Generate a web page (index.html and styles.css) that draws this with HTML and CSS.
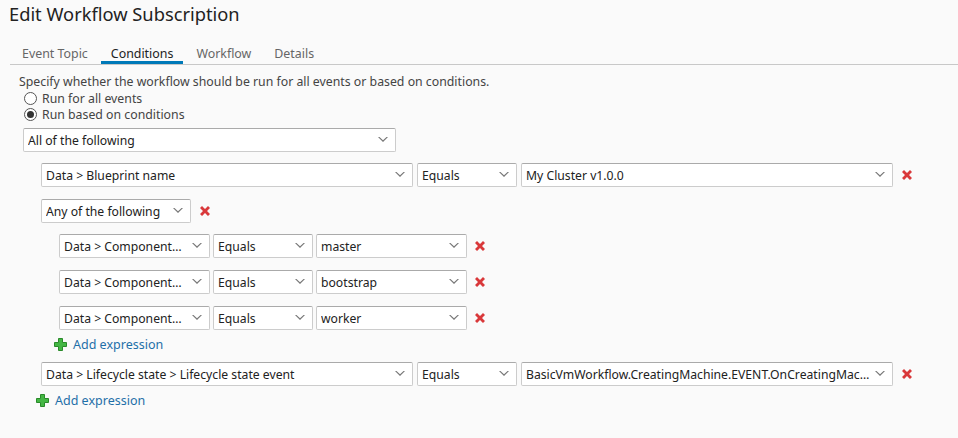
FILE: index.html
```html
<!DOCTYPE html>
<html>
<head>
<meta charset="utf-8">
<link rel="stylesheet" href="styles.css">
</head>
<body>
<div class="page">
  <h1 class="title">Edit Workflow Subscription</h1>
  <div class="tabs">
    <div class="tab">Event Topic</div>
    <div class="tab active">Conditions</div>
    <div class="tab">Workflow</div>
    <div class="tab">Details</div>
  </div>
  <div class="content">
    <p class="desc">Specify whether the workflow should be run for all events or based on conditions.</p>
    <label class="radio"><span class="dot"></span>Run for all events</label>
    <label class="radio"><span class="dot checked"></span>Run based on conditions</label>

    <div class="sel w-all top-sel"><span class="txt">All of the following</span><svg class="chev" viewBox="0 0 10 6"><path d="M0 0 L5 5 L10 0 L8.5 0 L5 3.2 L1.5 0Z"/></svg></div>

    <div class="group">
      <div class="row">
        <div class="sel w-field"><span class="txt">Data &gt; Blueprint name</span><svg class="chev" viewBox="0 0 10 6"><path d="M0 0 L5 5 L10 0 L8.5 0 L5 3.2 L1.5 0Z"/></svg></div>
        <div class="sel w-op"><span class="txt">Equals</span><svg class="chev" viewBox="0 0 10 6"><path d="M0 0 L5 5 L10 0 L8.5 0 L5 3.2 L1.5 0Z"/></svg></div>
        <div class="sel w-field"><span class="txt">My Cluster v1.0.0</span><svg class="chev" viewBox="0 0 10 6"><path d="M0 0 L5 5 L10 0 L8.5 0 L5 3.2 L1.5 0Z"/></svg></div>
        <svg class="del" viewBox="0 0 12 12"><path d="M1 3 L3 1 L6 4 L9 1 L11 3 L8 6 L11 9 L9 11 L6 8 L3 11 L1 9 L4 6Z"/></svg>
      </div>
      <div class="row">
        <div class="sel w-any"><span class="txt">Any of the following</span><svg class="chev" viewBox="0 0 10 6"><path d="M0 0 L5 5 L10 0 L8.5 0 L5 3.2 L1.5 0Z"/></svg></div>
        <svg class="del" viewBox="0 0 12 12"><path d="M1 3 L3 1 L6 4 L9 1 L11 3 L8 6 L11 9 L9 11 L6 8 L3 11 L1 9 L4 6Z"/></svg>
      </div>
      <div class="nested">
        <div class="row small">
          <div class="sel w-nfield"><span class="txt">Data &gt; Component…</span><svg class="chev" viewBox="0 0 10 6"><path d="M0 0 L5 5 L10 0 L8.5 0 L5 3.2 L1.5 0Z"/></svg></div>
          <div class="sel w-op"><span class="txt">Equals</span><svg class="chev" viewBox="0 0 10 6"><path d="M0 0 L5 5 L10 0 L8.5 0 L5 3.2 L1.5 0Z"/></svg></div>
          <div class="sel w-nfield"><span class="txt">master</span><svg class="chev" viewBox="0 0 10 6"><path d="M0 0 L5 5 L10 0 L8.5 0 L5 3.2 L1.5 0Z"/></svg></div>
          <svg class="del" viewBox="0 0 12 12"><path d="M1 3 L3 1 L6 4 L9 1 L11 3 L8 6 L11 9 L9 11 L6 8 L3 11 L1 9 L4 6Z"/></svg>
        </div>
        <div class="row small">
          <div class="sel w-nfield"><span class="txt">Data &gt; Component…</span><svg class="chev" viewBox="0 0 10 6"><path d="M0 0 L5 5 L10 0 L8.5 0 L5 3.2 L1.5 0Z"/></svg></div>
          <div class="sel w-op"><span class="txt">Equals</span><svg class="chev" viewBox="0 0 10 6"><path d="M0 0 L5 5 L10 0 L8.5 0 L5 3.2 L1.5 0Z"/></svg></div>
          <div class="sel w-nfield"><span class="txt">bootstrap</span><svg class="chev" viewBox="0 0 10 6"><path d="M0 0 L5 5 L10 0 L8.5 0 L5 3.2 L1.5 0Z"/></svg></div>
          <svg class="del" viewBox="0 0 12 12"><path d="M1 3 L3 1 L6 4 L9 1 L11 3 L8 6 L11 9 L9 11 L6 8 L3 11 L1 9 L4 6Z"/></svg>
        </div>
        <div class="row small">
          <div class="sel w-nfield"><span class="txt">Data &gt; Component…</span><svg class="chev" viewBox="0 0 10 6"><path d="M0 0 L5 5 L10 0 L8.5 0 L5 3.2 L1.5 0Z"/></svg></div>
          <div class="sel w-op"><span class="txt">Equals</span><svg class="chev" viewBox="0 0 10 6"><path d="M0 0 L5 5 L10 0 L8.5 0 L5 3.2 L1.5 0Z"/></svg></div>
          <div class="sel w-nfield"><span class="txt">worker</span><svg class="chev" viewBox="0 0 10 6"><path d="M0 0 L5 5 L10 0 L8.5 0 L5 3.2 L1.5 0Z"/></svg></div>
          <svg class="del" viewBox="0 0 12 12"><path d="M1 3 L3 1 L6 4 L9 1 L11 3 L8 6 L11 9 L9 11 L6 8 L3 11 L1 9 L4 6Z"/></svg>
        </div>
        <a class="add inner-add"><svg class="plus" viewBox="0 0 13 13"><path d="M4.5 0.5 H8.5 V4.5 H12.5 V8.5 H8.5 V12.5 H4.5 V8.5 H0.5 V4.5 H4.5Z"/></svg>Add expression</a>
      </div>
      <div class="row">
        <div class="sel w-field"><span class="txt">Data &gt; Lifecycle state &gt; Lifecycle state event</span><svg class="chev" viewBox="0 0 10 6"><path d="M0 0 L5 5 L10 0 L8.5 0 L5 3.2 L1.5 0Z"/></svg></div>
        <div class="sel w-op"><span class="txt">Equals</span><svg class="chev" viewBox="0 0 10 6"><path d="M0 0 L5 5 L10 0 L8.5 0 L5 3.2 L1.5 0Z"/></svg></div>
        <div class="sel w-field"><span class="txt">BasicVmWorkflow.CreatingMachine.EVENT.OnCreatingMac…</span><svg class="chev" viewBox="0 0 10 6"><path d="M0 0 L5 5 L10 0 L8.5 0 L5 3.2 L1.5 0Z"/></svg></div>
        <svg class="del" viewBox="0 0 12 12"><path d="M1 3 L3 1 L6 4 L9 1 L11 3 L8 6 L11 9 L9 11 L6 8 L3 11 L1 9 L4 6Z"/></svg>
      </div>
    </div>
    <a class="add outer-add"><svg class="plus" viewBox="0 0 13 13"><path d="M4.5 0.5 H8.5 V4.5 H12.5 V8.5 H8.5 V12.5 H4.5 V8.5 H0.5 V4.5 H4.5Z"/></svg>Add expression</a>
  </div>
</div>
</body>
</html>
```

FILE: styles.css
```css
* { box-sizing: border-box; }
html, body { margin: 0; padding: 0; background: #fafafa; }
body {
  font-family: "Noto Sans", "DejaVu Sans", sans-serif;
  font-size: 12px;
  color: #333;
  width: 958px;
  height: 438px;
  overflow: hidden;
}
.page { padding: 0; }
.title {
  margin: 0;
  padding: 2px 0 0 9px;
  font-size: 18.3px;
  font-weight: normal;
  color: #222;
  line-height: 24px;
}
.tabs {
  display: flex;
  gap: 3px;
  margin: 18px 0 0 10px;
  padding-left: 2px;
  border-bottom: 1px solid #c8c8c8;
}
.tab {
  padding: 1px 10px 0;
  line-height: 17px;
  height: 20px;
  color: #666;
  font-size: 12.4px;
}
.tab.active {
  color: #222;
  border-bottom: 3px solid #0079b8;
}
.content { padding: 8px 0 0 19px; }
.desc { margin: 0; line-height: 17px; color: #444; font-size: 12.3px; }
.radio {
  display: flex;
  align-items: center;
  height: 16px;
  color: #444;
  padding-left: 5px;
  font-size: 12.3px;
}
.dot {
  width: 13px;
  height: 13px;
  border: 1px solid #555;
  border-radius: 50%;
  background: #fff;
  margin-right: 5px;
  position: relative;
}
.dot.checked::after {
  content: "";
  position: absolute;
  left: 2px; top: 2px;
  width: 7px; height: 7px;
  border-radius: 50%;
  background: #333;
}
.sel {
  display: flex;
  align-items: center;
  height: 24px;
  background: #fff;
  border: 1px solid #ccc;
  border-top-color: #aaa;
  border-radius: 2px;
  padding: 0 7px 0 4px;
  color: #222;
  font-size: 12.2px;
}
.sel .txt {
  flex: 1;
  white-space: nowrap;
  overflow: hidden;
  min-width: 0;
}
.chev { width: 10px; height: 6px; fill: #777; flex: none; margin-left: 4px; }
.top-sel { margin: 6px 0 0 4px; }
.w-all { width: 373px; }
.w-field { width: 372px; }
.w-op { width: 100px; }
.w-any { width: 150px; }
.w-nfield { width: 151px; }
.group { padding-left: 22px; padding-top: 11px; }
.row { display: flex; align-items: center; gap: 4px; margin-bottom: 12px; }
.row.small { gap: 3px; }
.group > .row:nth-child(2) { margin-bottom: 11px; }
.del { width: 12px; height: 12px; fill: #d9383a; margin-left: 4px; flex: none; }
.nested { padding-left: 18px; }
.add {
  display: flex;
  align-items: center;
  color: #1f6fa8;
  font-size: 12.5px;
  height: 16px;
}
.plus { width: 13px; height: 13px; fill: #44b744; stroke: #2a8a2a; stroke-width: 1; margin-right: 6px; }
.inner-add { margin: -6px 0 10px -5px; }
.outer-add { margin: -6px 0 0 17px; }
```
